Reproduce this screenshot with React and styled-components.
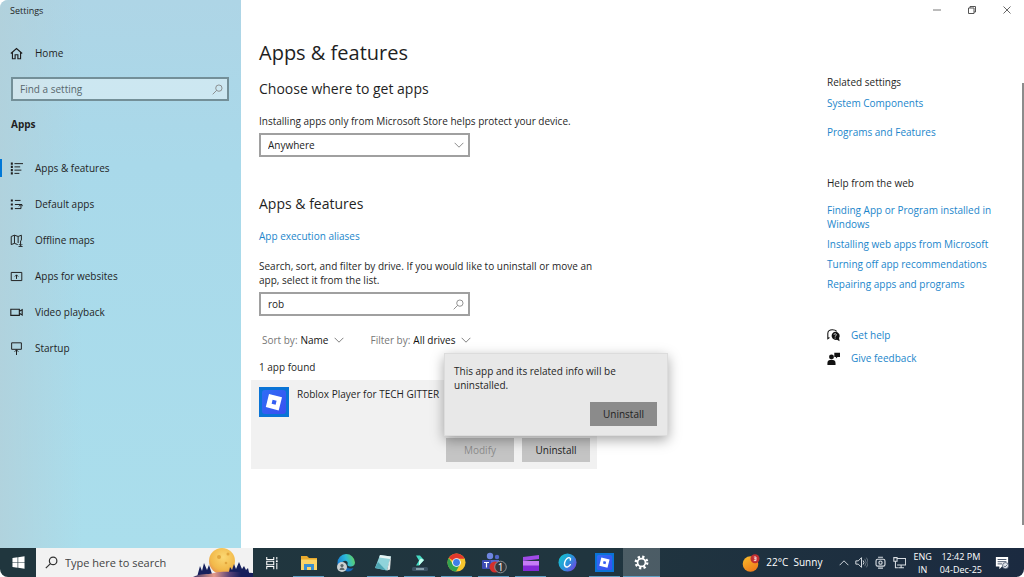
import React from "react";
import styled, { createGlobalStyle } from "styled-components";

const GlobalStyle = createGlobalStyle`
  * {
    box-sizing: border-box;
  }

  body {
    margin: 0;
    background: #ffffff;
    color: #1f1f1f;
    font-family: "Open Sans", "Noto Sans", sans-serif;
    font-size: 10px;
    line-height: 14px;
  }

  button, input, select {
    font: inherit;
    color: inherit;
    margin: 0;
  }

  h1, h2, h3, p, ul {
    margin: 0;
    padding: 0;
    font-weight: 400;
  }

  svg {
    display: block;
    flex: none;
  }
`;

/* ---------- icons ---------- */

const Line = ({ size = 13, box = 16, width = 1.2, children }) => (
  <svg
    width={size}
    height={size}
    viewBox={`0 0 ${box} ${box}`}
    fill="none"
    stroke="currentColor"
    strokeWidth={width}
  >
    {children}
  </svg>
);

const HomeIcon = () => (
  <Line width={1.4}>
    <path d="M1 8 8 1.8 15 8M3 6.5V14.5H6.3V9.5H9.7V14.5H13V6.5" />
  </Line>
);

const SearchIcon = ({ size = 11, width = 1.3 }) => (
  <Line size={size} width={width}>
    <circle cx="10" cy="6" r="4.6" />
    <path d="M6.7 9.3 1 15" />
  </Line>
);

const ChevronIcon = ({ size = 10 }) => (
  <Line size={size} width={1.5}>
    <path d="M1 4.5 8 11.5 15 4.5" />
  </Line>
);

const ListIcon = () => (
  <Line>
    <path d="M1 2h2.500M1 6h2.500M1 10h2.500M1 14h2.500" strokeWidth="2.600" />
    <path d="M5.500 2H16M5.500 6h7M5.500 10h8.500M5.500 14h6" />
  </Line>
);

const DefaultIcon = () => (
  <Line>
    <path d="M1 3h2.500M1 8h2.500M1 13h2.500" strokeWidth="2.600" />
    <path d="M6 3h7M6 8h9M6 13h7.500V8M11 10.300l2.500-2.500 2.500 2.500" />
  </Line>
);

const MapIcon = () => (
  <Line>
    <path d="M9.5 13 5.5 11.5 1.5 13V3L5.5 1.5 10 3 14 1.5V8M5.5 1.5v10M10 3v8M13 8v6M11 12.5l2 2 2-2M10.5 15.5h5" />
  </Line>
);

const WebsiteIcon = () => (
  <Line>
    <path d="M1.5 3h13v10h-13zM8 11V6M6 8l2-2 2 2" />
  </Line>
);

const VideoIcon = () => (
  <Line width={1.4}>
    <path d="M1 4h10.500v7.500H1zM11.500 6.500 15 4.500v6.500l-3.500-2" />
  </Line>
);

const StartupIcon = () => (
  <Line>
    <path d="M2 1h12v8H2zM8 16V9.5M5.7 12 8 9.7 10.3 12" />
  </Line>
);

const HelpIcon = () => (
  <svg width="13" height="13" viewBox="0 0 16 16">
    <path
      d="M3 10.500 1 12V5.500C1 2.500 3.500 1 6.500 1S11 2 12 3"
      fill="none"
      stroke="#111"
      strokeWidth="1.300"
    />
    <path d="M10 3.500a5.500 5 0 0 1 4.800 7.500L15.500 15l-3.200-1.700A5.400 5 0 1 1 10 3.500z" fill="#111" />
    <path d="M8.500 7.200c.2-2 3.200-1.600 3 .1 0 1-1.500 1-1.500 2.200M10 10.500v1.300" fill="none" stroke="#fff" strokeWidth="1" />
  </svg>
);

const FeedbackIcon = () => (
  <svg width="13" height="13" viewBox="0 0 16 16" fill="#111">
    <circle cx="5.500" cy="6" r="3" />
    <path d="M0.500 16V13.500c0-3 2-4 5-4s5 1 5 4V16z" />
    <path d="M9 1h7v5h-3l-2 2V6H9z" />
  </svg>
);

const RobloxIcon = ({ size }) => (
  <svg width={size} height={size} viewBox="0 0 30 30">
    <defs>
      <linearGradient id="rbx" x1="0" y1="0" x2="1" y2="1">
        <stop offset="0" stopColor="#2f6df6" />
        <stop offset="1" stopColor="#3a4ff0" />
      </linearGradient>
    </defs>
    <rect width="30" height="30" fill="#0a74d6" />
    <rect x="3" y="3" width="24" height="24" rx="3" fill="url(#rbx)" />
    <path
      d="M10 7 23 10.300 19.700 23.400 6.800 20z M13.600 12.700l-1 4 4 1 1-4z"
      fill="#fff"
      fillRule="evenodd"
    />
  </svg>
);

const WindowsIcon = () => (
  <svg width="13" height="13" viewBox="0 0 14 14" fill="#fff">
    <path d="M0.500 2.200 6 1.400V6.600H0.500zM6.700 1.300 13.500.3V6.600H6.700zM.5 7.300H6V12.600L.5 11.800zM6.700 7.300H13.500V13.700L6.700 12.700z" />
  </svg>
);

const MoonArt = () => (
  <svg width="60" height="29" viewBox="0 0 60 29">
    <defs>
      <radialGradient id="moon" cx="0.550" cy="0.350" r="0.700">
        <stop offset="0" stopColor="#fbd873" />
        <stop offset="0.700" stopColor="#f2b94a" />
        <stop offset="1" stopColor="#e58d50" />
      </radialGradient>
      <linearGradient id="hill" x1="0" y1="0" x2="1" y2="0">
        <stop offset="0" stopColor="#3b3568" />
        <stop offset="0.350" stopColor="#e59a8b" />
        <stop offset="0.600" stopColor="#5b4478" />
        <stop offset="0.800" stopColor="#161f5c" />
      </linearGradient>
    </defs>
    <circle cx="29" cy="13" r="13" fill="url(#moon)" />
    <circle cx="26" cy="9" r="2" fill="#e2a63c" />
    <circle cx="35" cy="6" r="1.500" fill="#e2a63c" />
    <circle cx="33" cy="15" r="1.300" fill="#e2a63c" />
    <path d="M4 29 7 18l2 5 2-8 3 7 2-5 4 12zM35 29l2-10 2 3 2-6 2 5 3-7 3 7 2-3 2 4 2-2 2 9z" fill="#17205c" />
    <path d="M0 29c8-4 14-2 21-4 9-2 20-1 39 0v4z" fill="url(#hill)" />
  </svg>
);

const TaskViewIcon = () => (
  <Line size={14} width={1.2}>
    <path d="M2 1v3h8V1M2 15v-3h8v3M2 6h8v4H2zM13.500 1v3M13.500 8v7" />
    <path d="M12.500 6h2" strokeWidth="2" />
  </Line>
);

const FolderIcon = () => (
  <svg width="18" height="18" viewBox="0 0 18 18">
    <path d="M1 2h6l2 2h8v11H1z" fill="#e8a92d" />
    <path d="M1 5.500h16V16H1z" fill="#fbd467" />
    <path d="M4 10h10v6h-3v-3H7v3H4z" fill="#3a8fd0" />
  </svg>
);

const EdgeIcon = () => (
  <svg width="20" height="20" viewBox="0 0 20 20">
    <defs>
      <linearGradient id="edge" x1="0" y1="0.500" x2="1" y2="0.200">
        <stop offset="0" stopColor="#1a7fd4" />
        <stop offset="0.500" stopColor="#2bb8dc" />
        <stop offset="1" stopColor="#66d45a" />
      </linearGradient>
    </defs>
    <path d="M1.500 10A8.700 8.700 0 0 1 19 9.500c0 3.500-3 4.500-6 3.800-2-.5-1.500-1.700-1.300-3C12 8 9 7 7 8.500 4.500 10 5 15 8 18 4 17 1.500 14 1.500 10z" fill="url(#edge)" />
    <path d="M6.500 9c-2 3 0 8.500 5 9.500 3 .3 5-1.500 6-3.500-4 1.500-7.500 0-8-3.500z" fill="#1668b8" />
    <circle cx="6" cy="14" r="5" fill="#ccd1d2" />
    <circle cx="6" cy="12.600" r="1.600" fill="#5c676b" />
    <path d="M3.500 17c0-3.500 5-3.500 5 0z" fill="#5c676b" />
  </svg>
);

const NotepadIcon = () => (
  <svg width="18" height="18" viewBox="0 0 18 18">
    <path d="M6 1 17 2.500 13 16.500 1 14z" fill="#8fd3da" />
    <path d="M6 1 17 2.500 16 5 5.200 3.500z" fill="#e7f4f4" />
    <path d="M15 8 17 2.500 16 15.500 13 16.500z" fill="#e3e9e8" />
    <path d="M4 8 12 16.300 1 14z" fill="#4ea6b4" />
  </svg>
);

const FilmoraIcon = () => (
  <svg width="18" height="18" viewBox="0 0 18 18">
    <rect x="1" y="13" width="16" height="4" rx="1.500" fill="#3c5364" />
    <path d="M5 15h8" stroke="#b9d2da" strokeWidth="1.200" />
    <path d="M5 1.500h4l4 4.500-5 5.500H5l3-5z" fill="#46dcc4" />
    <path d="M8 6.500l2-2 3 1.500-5 5.500z" fill="#c8fff0" />
  </svg>
);

const ChromeIcon = () => (
  <svg width="19" height="19" viewBox="0 0 20 20">
    <circle cx="10" cy="10" r="9.500" fill="#f8c62d" />
    <path d="M10 10 1.800 5.200A9.500 9.500 0 0 1 18.200 5.200V6H10z" fill="#e2382c" />
    <path d="M1.800 5.200A9.500 9.500 0 0 0 9.500 19.500L13.500 12 10 10 6.500 12z" fill="#32a350" />
    <circle cx="10" cy="10" r="4.600" fill="#fff" />
    <circle cx="10" cy="10" r="3.600" fill="#3f7fe8" />
  </svg>
);

const TeamsIcon = () => (
  <svg width="26" height="22" viewBox="0 0 26 22">
    <circle cx="9" cy="4" r="3.200" fill="#6f86e0" />
    <circle cx="16" cy="5" r="2.200" fill="#5267c9" />
    <path d="M6 8h12v9H6z" fill="#5666cb" />
    <rect x="1" y="8" width="9" height="9" rx="1" fill="#3c4cb4" />
    <path d="M3 10.500h5M5.500 10.500v5" stroke="#fff" strokeWidth="1.200" />
    <circle cx="14" cy="15" r="5.500" fill="#d2302b" />
    <circle cx="19.500" cy="15" r="5.800" fill="#33383c" stroke="#8b8f92" strokeWidth="1" />
    <text x="19.500" y="18.500" fontSize="10" textAnchor="middle" fill="#fff">1</text>
  </svg>
);

const ClipIcon = () => (
  <svg width="18" height="18" viewBox="0 0 18 18">
    <path d="M1 3 17 1v4L1 7z" fill="#a14be8" />
    <path d="M1 7h16v5H1z" fill="#c57cf5" />
    <path d="M1 11.500h16V17H1z" fill="#8428d6" />
  </svg>
);

const CanvaIcon = () => (
  <svg width="19" height="19" viewBox="0 0 20 20">
    <defs>
      <linearGradient id="canva" x1="0" y1="0.200" x2="1" y2="0.900">
        <stop offset="0" stopColor="#15c2cf" />
        <stop offset="0.500" stopColor="#2a93dc" />
        <stop offset="1" stopColor="#7a38e0" />
      </linearGradient>
    </defs>
    <circle cx="10" cy="10" r="9.500" fill="url(#canva)" />
    <path
      d="M13 7.500c.8-2.500-1.500-3.500-3.500-1.700C7 8 6 12 7.500 14c1.300 1.700 4 .5 5.500-1.700"
      fill="none"
      stroke="#fff"
      strokeWidth="1.500"
      strokeLinecap="round"
    />
  </svg>
);

const GearIcon = () => (
  <svg width="15" height="15" viewBox="0 0 16 16" fill="none" stroke="#fff">
    <circle cx="8" cy="8" r="6" strokeWidth="2.800" strokeDasharray="2.350 2.362" />
    <circle cx="8" cy="8" r="4.200" strokeWidth="1.800" />
  </svg>
);

const WeatherIcon = () => (
  <svg width="18" height="18" viewBox="0 0 18 18">
    <defs>
      <linearGradient id="sun" x1="0" y1="0" x2="0.600" y2="1">
        <stop offset="0" stopColor="#fbbf2c" />
        <stop offset="1" stopColor="#ef7d1a" />
      </linearGradient>
    </defs>
    <circle cx="8.500" cy="10" r="7.800" fill="url(#sun)" />
    <circle cx="13" cy="4.800" r="4.500" fill="#c22f32" />
    <path d="M11.800 3h2.200v3.600h-2.200M12 4.800h2" fill="none" stroke="#fff" strokeWidth="0.800" />
  </svg>
);

const SpeakerIcon = () => (
  <Line size={13}>
    <path d="M1 6h3l4-4v12l-4-4H1zM10 5.500q2 2.500 0 5" />
    <path d="M12 3.500q3.500 4.500 0 9M14 2q4 6 0 12" opacity="0.400" />
  </Line>
);

const MeetIcon = () => (
  <Line size={13} width={1.4}>
    <rect x="2.500" y="4" width="11" height="8.500" rx="2" />
    <circle cx="8" cy="8.200" r="2" />
    <path d="M5 1.500h6M5 15h6" />
  </Line>
);

const NetworkIcon = () => (
  <Line size={13} width={1.3}>
    <path d="M5 3h10.500v8H5M10 11v3M6.500 14.500h7M1 2h4v4.500H1zM3 6.500V14.500h3" />
  </Line>
);

const NoticeIcon = () => (
  <svg width="14" height="14" viewBox="0 0 16 16">
    <path d="M1 1h14v11H8l-3 3v-3H1z" fill="#fff" />
    <path d="M3 4h10M3 6.500h10M3 9h5" stroke="#33425a" strokeWidth="1" />
    <circle cx="12" cy="11" r="3.500" fill="#dfe4ea" stroke="#33425a" strokeWidth="0.800" />
    <path d="M10 11l1.500 1.500L14 10" fill="none" stroke="#33425a" strokeWidth="0.800" />
  </svg>
);

/* ---------- layout ---------- */

const Screen = styled.div`
  min-height: 100vh;
  display: flex;
  flex-direction: column;
  border-radius: 8px;
  overflow: hidden;
`;

const Window = styled.div`
  flex: 1;
  display: flex;
`;

const Sidebar = styled.nav`
  width: 241px;
  flex: none;
  padding: 4px 12px 0 0;
  background:
    linear-gradient(90deg, rgba(178, 208, 218, 0.8), rgba(178, 208, 220, 0) 34%),
    linear-gradient(180deg, #aed5e6 0%, #a9d9ea 30%, #aadeec 100%);
`;

const WindowTitle = styled.div`
  padding-left: 10px;
  font-size: 9px;
`;

const NavItem = styled.button`
  display: flex;
  align-items: center;
  gap: 12px;
  width: 100%;
  height: 36px;
  padding: 0 0 0 10px;
  border: 0;
  background: none;
  text-align: left;

  &::before {
    content: "";
    width: 2px;
    height: 18px;
    margin-left: -10px;
    margin-right: -4px;
    background: ${(props) => (props.$active ? "#0078d7" : "transparent")};
  }
`;

const HomeLink = styled(NavItem)`
  margin-top: 17px;
`;

const Field = styled.label`
  display: flex;
  align-items: center;
  width: ${(props) => (props.$wide ? "auto" : "211px")};
  height: 24px;
  padding-right: 4px;
  border: 2px solid ${(props) => (props.$wide ? "#738f98" : "#a0a0a0")};
  background: ${(props) => (props.$wide ? "rgba(255, 255, 255, 0.4)" : "#ffffff")};
  color: #858585;
`;

const SideField = styled(Field)`
  margin: 6px 0 0 11px;
`;

const TextInput = styled.input`
  flex: 1;
  min-width: 0;
  padding: 0 7px;
  border: 0;
  outline: 0;
  background: none;
  color: #222222;

  &::placeholder {
    color: #58676d;
    opacity: 1;
  }
`;

const Select = styled.select`
  appearance: none;
  flex: 1;
  padding: 0 7px;
  border: 0;
  outline: 0;
  background: none;
  color: #222222;
`;

const SectionName = styled.h2`
  padding: 16px 0 0 11px;
  margin-bottom: 19px;
  font-size: 10px;
  font-weight: 700;
`;

const Body = styled.div`
  flex: 1;
  min-width: 0;
  display: flex;
  flex-direction: column;
  background: #ffffff;
`;

const Caption = styled.div`
  display: flex;
  justify-content: flex-end;
  height: 20px;
`;

const CaptionButton = styled.button`
  display: flex;
  align-items: center;
  justify-content: center;
  width: 35px;
  padding: 0;
  border: 0;
  background: none;
  color: #555555;
`;

const Columns = styled.div`
  flex: 1;
  display: flex;
`;

const Main = styled.main`
  flex: 1;
  padding: 19px 20px 0 18px;
`;

const Title = styled.h1`
  font-size: 20px;
  line-height: 28px;
`;

const Heading = styled.h2`
  margin-top: ${(props) => (props.$far ? "37px" : "12px")};
  margin-bottom: 15px;
  font-size: 14px;
  line-height: 20px;
`;

const Note = styled.p`
  max-width: 350px;
  margin-bottom: 5px;
`;

const Link = styled.a`
  color: #1b86cb;
  text-decoration: none;
`;

const LinkLine = styled.p`
  margin-bottom: 16px;
`;

const Filters = styled.div`
  display: flex;
  gap: 27px;
  padding: 17px 0 13px 3px;
`;

const Filter = styled.label`
  display: flex;
  align-items: center;
  gap: 3px;
  color: #777777;
`;

const FilterSelect = styled.select`
  appearance: none;
  padding: 0;
  margin-right: 2px;
  border: 0;
  background: none;
  color: #111111;
  font-weight: 500;
`;

const AppCard = styled.section`
  position: relative;
  display: flex;
  flex-wrap: wrap;
  align-items: flex-start;
  gap: 8px;
  max-width: 346px;
  height: 89px;
  margin: 6px 0 0 -8px;
  padding: 7px 7px 7px 8px;
  background: #f1f1f1;
`;

const Actions = styled.div`
  display: flex;
  justify-content: flex-end;
  gap: 8px;
  width: 100%;
  padding-top: 13px;
`;

const Button = styled.button`
  width: ${(props) => (props.$strong ? "67px" : "68px")};
  height: 24px;
  padding: 0;
  border: 0;
  background: ${(props) => (props.$strong ? "#8b8b8b" : "#c4c4c4")};
  color: ${(props) => (props.disabled ? "#8c8c8c" : "#222222")};
`;

const Popup = styled.div`
  position: absolute;
  top: -27px;
  left: 193px;
  display: flex;
  flex-direction: column;
  width: 224px;
  padding: 10px 10px 9px 9px;
  border: 1px solid #dcdcdc;
  background: #e8e8e8;
  box-shadow: 0 4px 12px rgba(0, 0, 0, 0.35);

  ${Button} {
    align-self: flex-end;
    margin-top: 10px;
  }
`;

const Aside = styled.aside`
  width: 195px;
  flex: none;
  padding-top: 55px;
`;

const AsideGroup = styled.div`
  display: flex;
  flex-direction: column;
  gap: ${(props) => props.$gap};
  max-width: 172px;
  margin-bottom: ${(props) => props.$after};
`;

const AsideTitle = styled.h3`
  margin-bottom: ${(props) => props.$after};
  font-size: 10px;
`;

const Contact = styled.div`
  display: flex;
  align-items: center;
  gap: 11px;
`;

const ScrollThumb = styled.div`
  width: 2px;
  flex: none;
  margin: 63px 0 23px;
  background: #8c8c8c;
`;

const Taskbar = styled.footer`
  display: flex;
  height: 29px;
  flex: none;
  background: linear-gradient(90deg, #20363e, #20353f 60%, #1b2a40);
  color: #ffffff;
`;

const TaskButton = styled.button`
  display: flex;
  align-items: center;
  justify-content: center;
  width: ${(props) => (props.$start ? "36px" : "37px")};
  padding: 0;
  border: 0;
  background-color: ${(props) =>
    props.$active ? "rgba(255, 255, 255, 0.2)" : "transparent"};
  background-image: ${(props) =>
    props.$open ? "linear-gradient(#5f9fc4, #5f9fc4)" : "none"};
  background-position: bottom;
  background-repeat: no-repeat;
  background-size: ${(props) => (props.$active ? "100% 1px" : "31px 1px")};
`;

const TaskSearch = styled.label`
  display: flex;
  align-items: center;
  width: 217px;
  padding-left: 9px;
  background: #f2f2f2;
  color: #333333;
  font-size: 11px;

  input::placeholder {
    color: #444444;
  }
`;

const Tray = styled.div`
  display: flex;
  align-items: center;
  margin-left: auto;
  padding-right: 15px;
  text-align: center;
  font-size: 9px;
  line-height: 13px;
`;

const TrayIcons = styled.div`
  display: flex;
  align-items: center;
  gap: 6px;
  margin: 0 7px 0 17px;
  color: #d8dde2;
`;

const Weather = styled.div`
  display: flex;
  align-items: center;
  gap: 6px;
  font-size: 10px;
`;

const Clock = styled.div`
  margin: 0 13px 0 8px;
`;

const Up = styled.span`
  transform: rotate(180deg);
`;

const navItems = [
  { label: "Apps & features", icon: ListIcon, active: true },
  { label: "Default apps", icon: DefaultIcon },
  { label: "Offline maps", icon: MapIcon },
  { label: "Apps for websites", icon: WebsiteIcon },
  { label: "Video playback", icon: VideoIcon },
  { label: "Startup", icon: StartupIcon },
];

const webHelp = [
  "Finding App or Program installed in Windows",
  "Installing web apps from Microsoft",
  "Turning off app recommendations",
  "Repairing apps and programs",
];

const tasks = [
  { label: "Task View", icon: <TaskViewIcon /> },
  { label: "File Explorer", icon: <FolderIcon />, open: true },
  { label: "Edge", icon: <EdgeIcon /> },
  { label: "Notepad", icon: <NotepadIcon />, open: true },
  { label: "Filmora", icon: <FilmoraIcon />, open: true },
  { label: "Chrome", icon: <ChromeIcon />, open: true },
  { label: "Teams", icon: <TeamsIcon />, open: true },
  { label: "Clipchamp", icon: <ClipIcon />, open: true },
  { label: "Canva", icon: <CanvaIcon /> },
  { label: "Roblox", icon: <RobloxIcon size={19} />, open: true },
  { label: "Settings", icon: <GearIcon />, open: true, active: true },
];

function SettingsNav() {
  return (
    <Sidebar>
      <WindowTitle>Settings</WindowTitle>
      <HomeLink>
        <HomeIcon />
        Home
      </HomeLink>
      <SideField $wide>
        <TextInput placeholder="Find a setting" aria-label="Find a setting" />
        <SearchIcon />
      </SideField>
      <SectionName>Apps</SectionName>
      {navItems.map(({ label, icon: Icon, active }) => (
        <NavItem key={label} $active={active}>
          <Icon />
          {label}
        </NavItem>
      ))}
    </Sidebar>
  );
}

function AppsPage() {
  return (
    <Main>
      <Title>Apps &amp; features</Title>
      <Heading>Choose where to get apps</Heading>
      <Note>Installing apps only from Microsoft Store helps protect your device.</Note>
      <Field>
        <Select aria-label="Choose where to get apps">
          <option>Anywhere</option>
        </Select>
        <ChevronIcon />
      </Field>

      <Heading $far>Apps &amp; features</Heading>
      <LinkLine>
        <Link href="#aliases">App execution aliases</Link>
      </LinkLine>
      <Note>
        Search, sort, and filter by drive. If you would like to uninstall or move an
        app, select it from the list.
      </Note>
      <Field>
        <TextInput defaultValue="rob" aria-label="Search this list" />
        <SearchIcon />
      </Field>
      <Filters>
        <Filter>
          Sort by:
          <FilterSelect>
            <option>Name</option>
          </FilterSelect>
          <ChevronIcon />
        </Filter>
        <Filter>
          Filter by:
          <FilterSelect>
            <option>All drives</option>
          </FilterSelect>
          <ChevronIcon />
        </Filter>
      </Filters>
      <p>1 app found</p>
      <AppCard>
        <RobloxIcon size={30} />
        <p>Roblox Player for TECH GITTER</p>
        <Actions>
          <Button disabled>Modify</Button>
          <Button>Uninstall</Button>
        </Actions>
        <Popup role="dialog">
          <p>This app and its related info will be uninstalled.</p>
          <Button $strong>Uninstall</Button>
        </Popup>
      </AppCard>
    </Main>
  );
}

function Related() {
  return (
    <Aside>
      <AsideGroup $gap="15px" $after="37px">
        <div>
          <AsideTitle $after="7px">Related settings</AsideTitle>
          <Link href="#components">System Components</Link>
        </div>
        <Link href="#programs">Programs and Features</Link>
      </AsideGroup>
      <AsideTitle $after="13px">Help from the web</AsideTitle>
      <AsideGroup $gap="6px" $after="37px">
        {webHelp.map((text) => (
          <Link key={text} href="#web">
            {text}
          </Link>
        ))}
      </AsideGroup>
      <AsideGroup $gap="9px" $after="0">
        <Contact>
          <HelpIcon />
          <Link href="#help">Get help</Link>
        </Contact>
        <Contact>
          <FeedbackIcon />
          <Link href="#feedback">Give feedback</Link>
        </Contact>
      </AsideGroup>
    </Aside>
  );
}

function App() {
  return (
    <>
      <GlobalStyle />
      <Screen>
        <Window>
          <SettingsNav />
          <Body>
            <Caption>
              <CaptionButton aria-label="Minimize">
                <Line size={8} width={1.6}>
                  <path d="M0 8h16" />
                </Line>
              </CaptionButton>
              <CaptionButton aria-label="Restore">
                <Line size={8} width={2}>
                  <path d="M1 4h11v11H1zM4 4V1h11v11h-3" />
                </Line>
              </CaptionButton>
              <CaptionButton aria-label="Close">
                <Line size={8} width={1.8}>
                  <path d="M1 1l14 14M15 1 1 15" />
                </Line>
              </CaptionButton>
            </Caption>
            <Columns>
              <AppsPage />
              <Related />
              <ScrollThumb />
            </Columns>
          </Body>
        </Window>
        <Taskbar>
          <TaskButton $start aria-label="Start">
            <WindowsIcon />
          </TaskButton>
          <TaskSearch>
            <SearchIcon size={13} width={1.5} />
            <TextInput placeholder="Type here to search" aria-label="Type here to search" />
            <MoonArt />
          </TaskSearch>
          {tasks.map((task) => (
            <TaskButton
              key={task.label}
              aria-label={task.label}
              $open={task.open}
              $active={task.active}
            >
              {task.icon}
            </TaskButton>
          ))}
          <Tray>
            <Weather>
              <WeatherIcon />
              <span>22°C&nbsp; Sunny</span>
            </Weather>
            <TrayIcons>
              <Up>
                <ChevronIcon />
              </Up>
              <SpeakerIcon />
              <MeetIcon />
              <NetworkIcon />
            </TrayIcons>
            <div>
              ENG
              <br />
              IN
            </div>
            <Clock>
              12:42 PM
              <br />
              04-Dec-25
            </Clock>
            <NoticeIcon />
          </Tray>
        </Taskbar>
      </Screen>
    </>
  );
}

export default App;
